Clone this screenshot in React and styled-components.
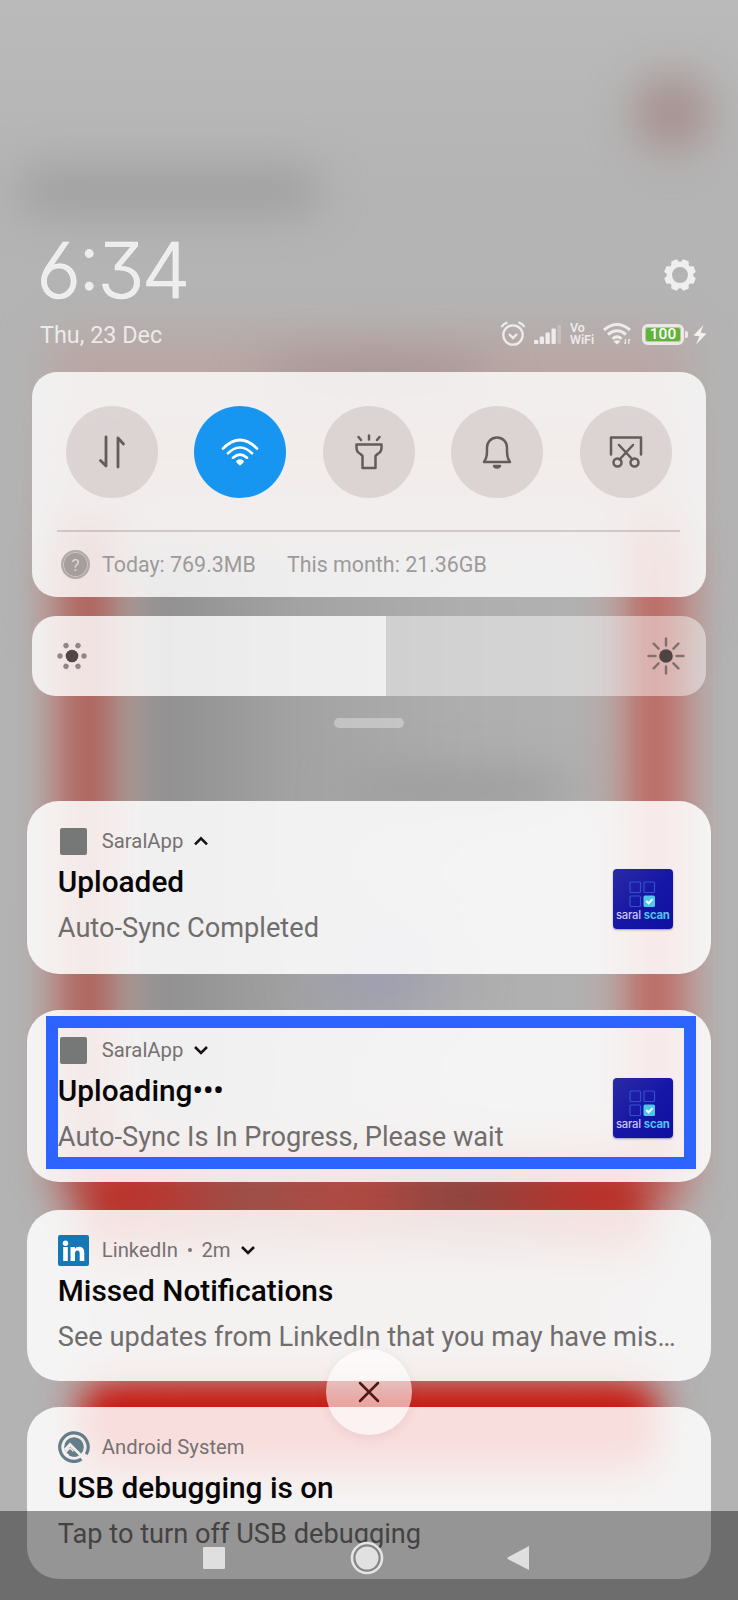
import React from 'react';
import styled, { createGlobalStyle } from 'styled-components';

const GlobalStyle = createGlobalStyle`
  * { box-sizing: border-box; }
  html, body { margin: 0; padding: 0; background: #b3b3b3; }
`;

const Screen = styled.main`
  position: relative;
  width: 738px;
  height: 1600px;
  overflow: hidden;
  font-family: Roboto, "Liberation Sans", sans-serif;
  background: #b3b3b3;
`;

const Wallpaper = styled.svg`
  position: absolute;
  inset: 0;
`;

const Shade = styled.div`
  position: relative;
  height: 1600px;
  display: flex;
  flex-direction: column;
`;

const Header = styled.header`
  height: 372px;
  padding: 230px 31px 0 40px;
  color: rgba(255, 255, 255, 0.76);
`;

const ClockRow = styled.div`
  display: flex;
  justify-content: space-between;
  height: 80px;
`;

const Clock = styled.div`
  font: 300 77.5px/80px Inter, sans-serif;
  font-feature-settings: "cv03", "cv09", "case";
  letter-spacing: -2.8px;
  margin-left: -3.5px;
  -webkit-text-stroke: 0.6px currentColor;
`;

const GearIcon = styled.svg`
  width: 34px;
  height: 34px;
  margin: 28px 10px 0 0;
`;

const DateRow = styled.div`
  display: flex;
  justify-content: space-between;
  align-items: center;
  height: 30px;
  margin-top: 9px;
`;

const DateText = styled.div`
  font-size: 23.4px;
  line-height: 30px;
  padding-top: 1px;
`;

const StatusIcons = styled.div`
  display: flex;
  align-items: center;
  height: 30px;
`;

const StatusIcon = styled.svg`
  display: block;
  flex: none;
  margin-left: ${(p) => p.$gap || 0}px;
`;

const VoWifi = styled.div`
  width: 26px;
  margin-left: 8px;
  font-size: 12.4px;
  line-height: 12px;
  font-weight: 600;
`;

const Battery = styled.div`
  display: flex;
  align-items: center;
  justify-content: center;
  width: 42px;
  height: 21px;
  margin-left: 11px;
  padding: 0;
  border: 3px solid #ede8e7;
  border-radius: 6px;
  background: #62b339;
  box-shadow: inset 0 0 0 1px #b9c9ae;
  color: #fff;
  font-size: 15.5px;
  line-height: 15px;
  font-weight: 500;
`;

const BatteryNub = styled.div`
  width: 3px;
  height: 7px;
  margin-left: 1px;
  border-radius: 0 2px 2px 0;
  background: #ede8e7;
`;

const QuickPanel = styled.section`
  width: 674px;
  height: 225px;
  margin-left: 32px;
  border-radius: 25px;
  padding: 34px 26px 0 25px;
  background: rgba(255, 255, 255, 0.81);
`;

const Toggles = styled.div`
  display: flex;
  justify-content: space-between;
  padding: 0 8px 0 8.5px;
`;

const Toggle = styled.button`
  display: flex;
  align-items: center;
  justify-content: center;
  width: 92px;
  height: 92px;
  padding: 0;
  border: 0;
  border-radius: 50%;
  background: ${(p) => (p.$on ? '#1796f1' : 'rgba(95, 75, 75, 0.15)')};
  color: ${(p) => (p.$on ? '#fff' : '#665b5b')};
`;

const Usage = styled.div`
  display: flex;
  align-items: center;
  margin-top: 32px;
  padding: 0 0 0 4px;
  height: 67px;
  border-top: 2px solid rgba(110, 95, 95, 0.25);
  font-size: 21.4px;
  color: #9d9a9a;
`;

const HelpBadge = styled.div`
  display: flex;
  align-items: center;
  justify-content: center;
  width: 29px;
  height: 29px;
  margin-right: 12px;
  border-radius: 50%;
  border: 2px solid #b3aaaa;
  box-shadow: inset 0 0 0 1px #d0c8c8;
  background: #a69d9d;
  color: #ded7d7;
  font-size: 17px;
`;

const UsageText = styled.span`
  width: ${(p) => p.$width}px;
  white-space: nowrap;
`;

const Brightness = styled.div`
  display: flex;
  width: 674px;
  height: 80px;
  margin: 19px 0 0 32px;
  border-radius: 24px;
  overflow: hidden;
`;

const BrightnessFill = styled.div`
  display: flex;
  align-items: center;
  width: 354px;
  padding-left: 24px;
  background: rgba(255, 255, 255, 0.81);
`;

const BrightnessRest = styled.div`
  flex: 1;
  display: flex;
  align-items: center;
  justify-content: flex-end;
  padding-right: 21px;
  background: rgba(255, 255, 255, 0.45);
`;

const Handle = styled.div`
  width: 70px;
  height: 10px;
  margin: 22px 0 0 334px;
  border-radius: 5px;
  background: rgba(255, 255, 255, 0.33);
`;

const Card = styled.article`
  position: relative;
  display: flex;
  flex: none;
  justify-content: space-between;
  width: 683.5px;
  height: ${(p) => p.$height}px;
  margin: ${(p) => p.$gap}px 0 0 27.3px;
  padding: 24px 37px 0 30.5px;
  border-radius: 32px;
  background: rgba(255, 255, 255, 0.86);
`;

const CardBody = styled.div`
  flex: 1;
  min-width: 0;
`;

const CardHead = styled.div`
  display: flex;
  align-items: center;
  height: 32px;
  font-size: 20.3px;
  color: #767171;
`;

const IconSlot = styled.div`
  display: flex;
  justify-content: center;
  align-items: center;
  width: 32px;
  height: 32px;
  margin-right: 12px;
`;

const GreySquare = styled.div`
  width: 27px;
  height: 27px;
  border-radius: 2px;
  background: #767877;
`;

const HeadDot = styled.span`
  width: 4px;
  height: 4px;
  margin: 0 9.8px;
  border-radius: 50%;
  background: #7b7676;
`;

const ChevronIcon = styled.svg`
  margin-left: 9.5px;
`;

const Title = styled.h2`
  margin: 8px 0 0;
  font-size: 29.8px;
  line-height: 34px;
  font-weight: 500;
  color: #080606;
  white-space: nowrap;
`;

const Message = styled.p`
  margin: 13px 0 0;
  font-size: 27.2px;
  line-height: 32px;
  color: #706d6d;
  white-space: nowrap;
`;

const AppLogo = styled.div`
  display: flex;
  flex-direction: column;
  align-items: center;
  flex: none;
  width: 60px;
  height: 60px;
  margin: 43.5px 1px 0 0;
  padding-top: 12px;
  border-radius: 4px;
  background: linear-gradient(135deg, #2a2ba4, #1515a6 55%, #1010a0);
  box-shadow: 0 1px 2px rgba(20, 20, 110, 0.4);
`;

const LogoWords = styled.div`
  margin-top: 1px;
  font: 500 11.3px/13px Inter, sans-serif;
  letter-spacing: -0.2px;
  color: #cbc6f4;
  white-space: nowrap;
  b { color: #4fc4ee; font-weight: 700; }
`;

const Highlight = styled.div`
  position: absolute;
  left: 18.7px;
  top: 6px;
  width: 650px;
  height: 153px;
  border: 12.5px solid #2d64ff;
`;

const ClearButton = styled.button`
  position: absolute;
  left: 326px;
  top: 1348.500px;
  width: 86px;
  height: 86px;
  display: flex;
  align-items: center;
  justify-content: center;
  padding: 0;
  border: 0;
  border-radius: 50%;
  background: rgba(255, 255, 255, 0.6);
  box-shadow: 0 3px 12px rgba(120, 40, 40, 0.09);
`;

const NavBar = styled.nav`
  position: absolute;
  left: 0;
  right: 0;
  bottom: 0;
  height: 89px;
  display: flex;
  align-items: flex-start;
  padding: 30px 0 0 203px;
  background: rgba(0, 0, 0, 0.39);
`;

const NavIcon = styled.svg`
  margin-right: ${(p) => p.$after || 0}px;
`;

const Blur = ({ id, size }) => (
  <filter id={id} filterUnits="userSpaceOnUse" x="-100" y="-100" width="938" height="1800" colorInterpolationFilters="sRGB">
    <feGaussianBlur stdDeviation={size} />
  </filter>
);

function Backdrop() {
  return (
    <Wallpaper width="738" height="1600" viewBox="0 0 738 1600">
      <defs>
        <Blur id="band" size="16" />
        <Blur id="soft" size="22" />
        <Blur id="wide" size="32" />
        <linearGradient id="base" x1="0" y1="0" x2="0" y2="1">
          <stop offset="0" stopColor="#bababa" />
          <stop offset="0.12" stopColor="#b4b4b4" />
          <stop offset="1" stopColor="#b3b3b3" />
        </linearGradient>
        <linearGradient id="inner" x1="0" y1="0" x2="1" y2="0">
          <stop offset="0" stopColor="#8b8b8b" />
          <stop offset="0.1" stopColor="#939393" />
          <stop offset="0.35" stopColor="#a3a3a3" />
          <stop offset="0.7" stopColor="#aeaeae" />
          <stop offset="1" stopColor="#b2b2b2" />
        </linearGradient>
        <linearGradient id="frame" x1="0" y1="0" x2="1" y2="0">
          <stop offset="0" stopColor="#bd3129" />
          <stop offset="0.12" stopColor="#b73831" />
          <stop offset="0.28" stopColor="#9c4f49" />
          <stop offset="0.48" stopColor="#b14840" />
          <stop offset="0.68" stopColor="#8e443f" />
          <stop offset="0.9" stopColor="#b6332b" />
          <stop offset="1" stopColor="#bd3129" />
        </linearGradient>
      </defs>
      <rect width="738" height="1600" fill="url(#base)" />
      <rect x="20" y="168" width="300" height="46" rx="20" fill="#9f9f9f" filter="url(#soft)" />
      <circle cx="672" cy="113" r="38" fill="#a68f8e" filter="url(#soft)" />
      <rect x="48" y="335" width="642" height="295" fill="#b9a6a4" filter="url(#soft)" />
      <ellipse cx="375" cy="376" rx="120" ry="18" fill="#a49192" filter="url(#soft)" />
      <rect x="70" y="435" width="600" height="45" fill="#b99290" filter="url(#soft)" />
      <rect x="44" y="560" width="655" height="640" fill="#b9a4a1" filter="url(#band)" />
      <rect x="66" y="520" width="44" height="680" fill="#ad514a" filter="url(#soft)" />
      <rect x="634" y="520" width="42" height="680" fill="#c05952" filter="url(#soft)" />
      <rect x="136" y="550" width="468" height="580" fill="url(#inner)" filter="url(#soft)" />
      <ellipse cx="460" cy="790" rx="120" ry="20" fill="#9b9b9b" filter="url(#soft)" />
      <ellipse cx="380" cy="968" rx="65" ry="20" fill="#9494bc" filter="url(#wide)" />
      <rect x="84" y="1158" width="566" height="100" fill="url(#frame)" filter="url(#soft)" />
      <rect x="100" y="1180" width="530" height="34" fill="url(#frame)" filter="url(#band)" />
      <rect x="110" y="1265" width="520" height="95" fill="#b09998" filter="url(#wide)" />
      <rect x="84" y="1385" width="570" height="85" fill="#cc1c13" filter="url(#soft)" />
      <rect x="94" y="1398" width="552" height="44" fill="#ca140c" filter="url(#band)" />
    </Wallpaper>
  );
}

function StatusBar() {
  return (
    <StatusIcons>
      <StatusIcon width="26" height="26" viewBox="0 0 26 26" fill="none" stroke="currentColor" strokeWidth="2.3">
        <circle cx="13" cy="14" r="9.7" />
        <path d="M9 13l4 4 4-4M1.5 6Q3.5 2.500 7.500 1.300M24.500 6Q22.500 2.500 18.500 1.300" />
      </StatusIcon>
      <StatusIcon $gap={8} width="28" height="22" viewBox="0 0 28 22" fill="currentColor">
        <rect x="0" y="17" width="4.300" height="4" rx="1" />
        <rect x="5.700" y="13.500" width="4.300" height="7.500" rx="1" />
        <rect x="11.500" y="9.500" width="4.300" height="11.500" rx="1" />
        <rect x="17.500" y="5.500" width="4.300" height="15.500" rx="1" />
        <rect x="23.500" y="2" width="3.500" height="19" rx="1" opacity=".3" />
      </StatusIcon>
      <VoWifi>Vo<br />WiFi</VoWifi>
      <StatusIcon $gap={7} width="28" height="24" viewBox="0 0 28 24" fill="none" stroke="currentColor" strokeWidth="3">
        <path d="M1 8Q14-3 27 8M5 12.500Q14 5 23 12.500M9.500 16.800Q14 13 18.500 16.800" />
        <path d="M10.500 19.500Q14 17 17.500 19.500L14 22.500z" fill="currentColor" stroke="none" />
        <path d="M22.500 17v5M21.300 20.500l1.200 1.500M25.800 22v-5M25.800 17l1.200 1.500" strokeWidth="1.200" />
      </StatusIcon>
      <Battery>100</Battery>
      <BatteryNub />
      <StatusIcon $gap={5} width="14" height="21" viewBox="0 0 14 21" fill="#f5f1f0">
        <path d="M10.500 1L.500 11.500l6 .8L3 20.500 13.500 9.500l-6-.8z" />
      </StatusIcon>
    </StatusIcons>
  );
}

const ToggleIcon = ({ children, width = 2.5 }) => (
  <svg width="40" height="40" viewBox="0 0 40 40" fill="none" stroke="currentColor" strokeWidth={width} strokeLinecap="round" strokeLinejoin="round">{children}</svg>
);

const Chevron = ({ up }) => (
  <ChevronIcon width="16" height="12" viewBox="0 0 16 12" fill="none" stroke="#171313" strokeWidth="2.6">
    <path d={up ? 'M2 9.300L8 3.300 14 9.300' : 'M2 3L8 9 14 3'} />
  </ChevronIcon>
);

function SaralLogo() {
  return (
    <AppLogo>
      <svg width="27" height="27" viewBox="0 0 27 27" fill="none" stroke="#3351cd" strokeWidth="1.200">
        <rect x="1" y="1" width="10.500" height="10.500" rx="1" />
        <rect x="15" y="1" width="10.500" height="10.500" rx="1" />
        <rect x="1" y="15" width="10.500" height="10.500" rx="1" />
        <rect x="14.500" y="14.500" width="11.500" height="11.500" rx="1.500" fill="#4fc5ea" stroke="none" />
        <path d="M17.300 20l2.300 2.300 4-4.200" stroke="#fff" strokeWidth="2" />
      </svg>
      <LogoWords>saral <b>scan</b></LogoWords>
    </AppLogo>
  );
}

function Notification({ height, gap, icon, app, age, chevron, title, message, logo, highlighted }) {
  return (
    <Card $height={height} $gap={gap}>
      <CardBody>
        <CardHead>
          <IconSlot>{icon}</IconSlot>
          {app}
          {age && <><HeadDot />{age}</>}
          {chevron && <Chevron up={chevron === 'up'} />}
        </CardHead>
        <Title>{title}</Title>
        <Message>{message}</Message>
      </CardBody>
      {logo && <SaralLogo />}
      {highlighted && <Highlight />}
    </Card>
  );
}

const LinkedInIcon = () => (
  <svg width="31" height="31" viewBox="0 0 31 31">
    <rect width="31" height="31" rx="2" fill="#1478b5" />
    <g fill="#fff">
      <circle cx="7.500" cy="8.200" r="2.700" />
      <rect x="5.200" y="12" width="4.600" height="14" />
      <path d="M12.500 12h4.400v2c.8-1.400 2.300-2.300 4.200-2.300 4 0 5.200 2.500 5.200 6.300v8h-4.600v-7.200c0-1.900-.3-3.200-2.200-3.200-1.900 0-2.500 1.400-2.500 3.200V26h-4.500z" />
    </g>
  </svg>
);

const AndroidIcon = () => (
  <svg width="32" height="32" viewBox="0 0 32 32">
    <path d="M23.500 28.200A14.200 14.200 0 1 1 28.300 23.200" fill="none" stroke="#637e8b" strokeWidth="3.200" />
    <circle cx="16" cy="16" r="9.800" fill="#637e8b" />
    <path d="M7 19L12 13.500 24.500 26 27.500 28.500" fill="none" stroke="#f8eded" strokeWidth="2.800" />
    <path d="M6.500 20.500L12 16l4 4-6 5z" fill="#f8eded" />
    <path d="M8.500 21.500l3.500-3.500 7.500 7.300Q13.500 27 8.500 21.500z" fill="#637e8b" />
  </svg>
);

const rays = [0, 45, 90, 135, 180, 225, 270, 315];

export default function App() {
  return (
    <Screen>
      <GlobalStyle />
      <Backdrop />
      <Shade>
        <Header>
          <ClockRow>
            <Clock>6:34</Clock>
            <GearIcon viewBox="0 0 34 34">
              <g stroke="#efefef">
                <circle cx="17" cy="17" r="10.600" strokeWidth="5.200" fill="none" />
                {rays.map((a) => (
                  <path key={a} d="M13.400 5L14.600 1.800h4.800L20.600 5z" strokeWidth="1.400" strokeLinejoin="round" fill="#efefef" transform={`rotate(${a + 22.5} 17 17)`} />
                ))}
              </g>
            </GearIcon>
          </ClockRow>
          <DateRow>
            <DateText>Thu, 23 Dec</DateText>
            <StatusBar />
          </DateRow>
        </Header>

        <QuickPanel>
          <Toggles>
            <Toggle aria-label="Mobile data">
              <ToggleIcon width={2.800}><path d="M14 5v29l-5.500-5.500M26 35V6l5.500 6" /></ToggleIcon>
            </Toggle>
            <Toggle $on aria-label="Wi-Fi">
              <ToggleIcon width={2.600}>
                <path d="M3 16.500Q20-.500 37 16.500M8 21.300Q20 9.700 32 21.300M13 25.700Q20 19.500 27 25.700" />
                <path d="M17.500 29.500Q20 27.800 22.500 29.500L20 32z" fill="currentColor" />
              </ToggleIcon>
            </Toggle>
            <Toggle aria-label="Flashlight">
              <ToggleIcon><path d="M7.500 12.500h25v3.500q0 4-4 6l-2 2V36h-13V24l-2-2q-4-2-4-6zM20 3.500v4M9.500 5l2.500 3M30.500 5L28 8" /></ToggleIcon>
            </Toggle>
            <Toggle aria-label="Ring">
              <ToggleIcon>
                <path d="M7 30Q10 26 10 19v-3.500a10 10 0 0 1 20 0V19q0 7 3 11z" />
                <path d="M17 34q3 3 6 0z" fill="currentColor" />
              </ToggleIcon>
            </Toggle>
            <Toggle aria-label="Screenshot">
              <ToggleIcon>
                <path d="M5 22.500v-17h30v17M13 13l13.500 14.500M27 13L13.500 27.500" />
                <circle cx="11.500" cy="30.500" r="4" />
                <circle cx="28.500" cy="30.500" r="4" />
              </ToggleIcon>
            </Toggle>
          </Toggles>
          <Usage>
            <HelpBadge>?</HelpBadge>
            <UsageText $width={185}>Today: 769.3MB</UsageText>
            <UsageText $width={205}>This month: 21.36GB</UsageText>
          </Usage>
        </QuickPanel>

        <Brightness>
          <BrightnessFill>
            <svg width="32" height="32" viewBox="0 0 32 32">
              <circle cx="16" cy="16" r="6.300" fill="#514747" />
              {[0, 60, 120, 180, 240, 300].map((a) => (
                <circle key={a} cx="28" cy="16" r="2.700" fill="#918787" transform={`rotate(${a} 16 16)`} />
              ))}
            </svg>
          </BrightnessFill>
          <BrightnessRest>
            <svg width="38" height="38" viewBox="0 0 38 38">
              <circle cx="19" cy="19" r="6.800" fill="#504442" />
              {rays.map((a) => (
                <path key={a} d="M29.500 19h7" stroke="#827270" strokeWidth="2.500" strokeLinecap="round" transform={`rotate(${a} 19 19)`} />
              ))}
            </svg>
          </BrightnessRest>
        </Brightness>
        <Handle />

        <Notification height={173} gap={73} icon={<GreySquare />} app="SaralApp" chevron="up" title="Uploaded" message="Auto-Sync Completed" logo />
        <Notification height={171.5} gap={36} icon={<GreySquare />} app="SaralApp" chevron="down" title="Uploading•••" message="Auto-Sync Is In Progress, Please wait" logo highlighted />
        <Notification height={171} gap={28.5} icon={<LinkedInIcon />} app="LinkedIn" age="2m" chevron="down" title="Missed Notifications" message="See updates from LinkedIn that you may have mis…" />
        <Notification height={172} gap={26} icon={<AndroidIcon />} app="Android System" title="USB debugging is on" message="Tap to turn off USB debugging" />
      </Shade>

      <ClearButton aria-label="Clear all">
        <svg width="24" height="24" viewBox="0 0 24 24" fill="none" stroke="#541717" strokeWidth="2.500" strokeLinecap="round">
          <path d="M3 3l18 18M21 3L3 21" />
        </svg>
      </ClearButton>

      <NavBar>
        <NavIcon $after={125} width="22" height="34" viewBox="0 0 22 34"><rect y="6" width="22" height="22" rx="1" fill="#dfdfdf" /></NavIcon>
        <NavIcon $after={123} width="34" height="34" viewBox="0 0 34 34">
          <circle cx="17" cy="17" r="15" fill="#858585" stroke="#e4e4e4" strokeWidth="2.600" />
          <circle cx="17" cy="17" r="11.500" fill="#e1e1e1" />
        </NavIcon>
        <NavIcon width="22" height="34" viewBox="0 0 22 34"><path d="M22 5v24L1 18.200q-1.200-1 0-2z" fill="#dfdfdf" /></NavIcon>
      </NavBar>
    </Screen>
  );
}
